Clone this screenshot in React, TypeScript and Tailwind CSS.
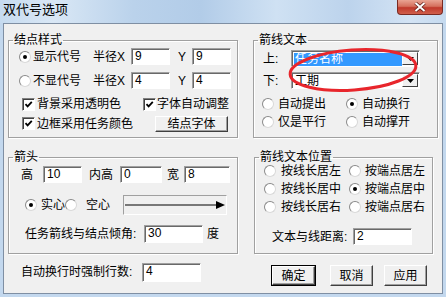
import React from "react";

const font = "font-['Liberation_Sans','Noto_Sans_CJK_SC',sans-serif]";

function Radio({ on }: { on?: boolean }) {
  return (
    <span className="w-[12px] h-[12px] shrink-0 rounded-full bg-white border border-t-[#8a8a8a] border-l-[#8a8a8a] border-r-[#d8d8d8] border-b-[#d8d8d8] flex items-center justify-center">
      {on && <span className="w-[4px] h-[4px] rounded-full bg-black" />}
    </span>
  );
}

function Check() {
  return (
    <span className="w-[13px] h-[13px] shrink-0 bg-white border border-t-[#808080] border-l-[#808080] border-b-white border-r-white shadow-[inset_1px_1px_0_#404040] flex items-center justify-center">
      <svg width="9" height="9" viewBox="0 0 9 9">
        <path d="M1.5 4.2 L3.6 6.4 L7.8 1.8" stroke="#000" strokeWidth="1.8" fill="none" />
      </svg>
    </span>
  );
}

function Field({ v, w }: { v: string; w: string }) {
  return (
    <div className={`${w} h-full bg-white border border-t-[#a0a0a0] border-l-[#a0a0a0] border-b-white border-r-white shadow-[inset_1px_1px_0_#696969] pl-[3px] text-[12px] leading-[15px]`}>
      {v}
    </div>
  );
}

function Btn({ label, w, def }: { label: string; w: string; def?: boolean }) {
  return (
    <div className={`${w} h-full ${def ? "border border-black" : ""}`}>
      <div className="h-full bg-[#f0f0f0] border border-t-white border-l-white border-b-[#404040] border-r-[#404040] shadow-[inset_-1px_-1px_0_#a0a0a0] flex items-center justify-center text-[12px]">
        {label}
      </div>
    </div>
  );
}

function Combo({ v, sel }: { v: string; sel?: boolean }) {
  return (
    <div className="w-[129px] h-full bg-white border border-t-[#a0a0a0] border-l-[#a0a0a0] border-b-white border-r-white shadow-[inset_1px_1px_0_#696969] flex p-[1px] pl-[2px]">
      <div className={`flex-1 h-full mt-[1px] pl-[1px] text-[12px] leading-[13px] ${sel ? "bg-[#3399ff] text-white" : ""}`}>{v}</div>
      <div className="w-[16px] h-full bg-[#f0f0f0] border border-t-white border-l-white border-b-[#404040] border-r-[#404040] flex items-center justify-center">
        <svg width="7" height="4" viewBox="0 0 7 4">
          <path d="M0 0 H7 L3.5 4 Z" fill="#000" />
        </svg>
      </div>
    </div>
  );
}

function Group({ title, cls, children }: { title: string; cls: string; children: React.ReactNode }) {
  return (
    <fieldset className={`${cls} border border-[#a0a0a0] shadow-[1px_1px_0_#fff,inset_1px_1px_0_#fff] flex flex-col`}>
      <legend className="ml-[4px] px-[1px] text-[12px] leading-[14px]">{title}</legend>
      {children}
    </fieldset>
  );
}

export default function App() {
  return (
    <div className={`relative w-[446px] h-[297px] overflow-hidden bg-[#c3d8ee] text-black text-[12px] leading-[14px] ${font}`}>
      {/* title bar */}
      <div className="h-[23px] flex bg-[linear-gradient(90deg,#c6dbf0_0%,#d9e7f5_12%,#bad2eb_30%,#b2cce8_45%,#cfe1f3_62%,#bcd3ec_78%,#d3e3f4_92%,#c5daef_100%)]">
        <div className="pl-[3px] pt-[2px] text-[13px] leading-[16px] text-black">双代号选项</div>
        <div className="ml-auto mr-[3px] w-[46px] h-[15px] rounded-b-[4px] border border-t-0 border-[#7a2a22] bg-[linear-gradient(180deg,#e9a493_0%,#d5705d_45%,#c0392b_55%,#d0604c_100%)] flex items-center justify-center">
          <svg width="12" height="10" viewBox="0 0 12 10">
            <path d="M1.5 1 L10.5 9 M10.5 1 L1.5 9" stroke="#5a1a14" strokeWidth="3.4" />
            <path d="M1.5 1 L10.5 9 M10.5 1 L1.5 9" stroke="#fff" strokeWidth="2" />
          </svg>
        </div>
      </div>

      {/* client area */}
      <div className="mx-[3px] h-[271px] bg-[#f0f0f0] border border-[#7f8fa3] px-[4px] pt-[9px]">
        <div className="flex">
          <Group title="结点样式" cls="w-[230px] h-[105px]">
            <div className="mt-[1px] h-[17px] flex items-center">
              <span className="ml-[10px]"><Radio on /></span>
              <span className="ml-[2px] w-[60px]">显示代号</span>
              <span className="w-[38px]">半径X</span>
              <Field v="9" w="w-[39px]" />
              <span className="w-[22px] pl-[8px]">Y</span>
              <Field v="9" w="w-[39px]" />
            </div>
            <div className="mt-[7px] h-[17px] flex items-center">
              <span className="ml-[10px]"><Radio /></span>
              <span className="ml-[2px] w-[60px]">不显代号</span>
              <span className="w-[38px]">半径X</span>
              <Field v="4" w="w-[39px]" />
              <span className="w-[22px] pl-[8px]">Y</span>
              <Field v="4" w="w-[39px]" />
            </div>
            <div className="mt-[7px] h-[16px] flex items-center">
              <span className="ml-[13px]"><Check /></span>
              <span className="ml-[2px] w-[106px]">背景采用透明色</span>
              <Check />
              <span className="ml-[1px] whitespace-nowrap">字体自动调整</span>
            </div>
            <div className="mt-[3px] h-[17px] flex items-center">
              <span className="ml-[13px]"><Check /></span>
              <span className="ml-[2px] w-[118px]">边框采用任务颜色</span>
              <div className="h-[16px]"><Btn label="结点字体" w="w-[73px]" /></div>
            </div>
          </Group>

          <Group title="箭线文本" cls="ml-[15px] w-[185px] h-[105px]">
            <div className="mt-[3px] h-[17px] flex items-center">
              <span className="ml-[9px] w-[28px]">上:</span>
              <Combo v="任务名称" sel />
            </div>
            <div className="mt-[5px] h-[17px] flex items-center">
              <span className="ml-[9px] w-[28px]">下:</span>
              <Combo v="工期" />
            </div>
            <div className="mt-[7px] h-[16px] flex items-center">
              <span className="ml-[8px]"><Radio /></span>
              <span className="ml-[4px] w-[68px]">自动提出</span>
              <Radio on />
              <span className="ml-[4px]">自动换行</span>
            </div>
            <div className="mt-[2px] h-[16px] flex items-center">
              <span className="ml-[8px]"><Radio /></span>
              <span className="ml-[4px] w-[68px]">仅是平行</span>
              <Radio />
              <span className="ml-[4px]">自动撑开</span>
            </div>
          </Group>
        </div>

        <div className="mt-[12px] flex">
          <Group title="箭头" cls="w-[230px] h-[104px]">
            <div className="mt-[2px] h-[17px] flex items-center">
              <span className="ml-[12px] w-[22px]">高</span>
              <Field v="10" w="w-[39px]" />
              <span className="w-[38px] pl-[7px]">内高</span>
              <Field v="0" w="w-[42px]" />
              <span className="w-[22px] pl-[5px]">宽</span>
              <Field v="8" w="w-[46px]" />
            </div>
            <div className="mt-[12px] h-[20px] flex items-center">
              <span className="ml-[16px]"><Radio on /></span>
              <span className="ml-[4px] w-[24px] whitespace-nowrap">实心</span>
              <Radio />
              <span className="ml-[9px] w-[24px] whitespace-nowrap">空心</span>
              <div className="ml-[13px] w-[104px] h-full border border-t-[#a0a0a0] border-l-[#a0a0a0] border-b-white border-r-white flex items-center">
                <svg width="102" height="10" viewBox="0 0 102 10">
                  <path d="M1 5 H93" stroke="#000" strokeWidth="1" />
                  <path d="M92 1 L101 5 L92 9 Z" fill="#000" />
                </svg>
              </div>
            </div>
            <div className="mt-[10px] h-[18px] flex items-center">
              <span className="ml-[16px] w-[119px] whitespace-nowrap">任务箭线与结点倾角:</span>
              <Field v="30" w="w-[59px]" />
              <span className="ml-[4px]">度</span>
            </div>
          </Group>

          <Group title="箭线文本位置" cls="ml-[16px] w-[179px] h-[104px]">
            <div className="h-[14px] flex items-center">
              <span className="ml-[9px]"><Radio /></span>
              <span className="ml-[5px] w-[68px]">按线长居左</span>
              <Radio />
              <span className="ml-[4px] whitespace-nowrap">按端点居左</span>
            </div>
            <div className="mt-[4px] h-[14px] flex items-center">
              <span className="ml-[9px]"><Radio /></span>
              <span className="ml-[5px] w-[68px]">按线长居中</span>
              <Radio on />
              <span className="ml-[4px] whitespace-nowrap">按端点居中</span>
            </div>
            <div className="mt-[4px] h-[14px] flex items-center">
              <span className="ml-[9px]"><Radio /></span>
              <span className="ml-[5px] w-[68px]">按线长居右</span>
              <Radio />
              <span className="ml-[4px] whitespace-nowrap">按端点居右</span>
            </div>
            <div className="mt-[14px] h-[17px] flex items-center">
              <span className="ml-[17px] w-[81px] whitespace-nowrap">文本与线距离:</span>
              <Field v="2" w="w-[59px]" />
            </div>
          </Group>
        </div>

        <div className="mt-[9px] h-[23px] flex items-start">
          <span className="ml-[13px] mt-[2px] w-[121px] whitespace-nowrap">自动换行时强制行数:</span>
          <div className="h-[19px]"><Field v="4" w="w-[59px]" /></div>
          <div className="ml-[70px] mt-[2px] h-[21px]"><Btn label="确定" w="w-[45px]" def /></div>
          <div className="ml-[14px] mt-[2px] h-[21px]"><Btn label="取消" w="w-[43px]" /></div>
          <div className="ml-[11px] mt-[2px] h-[21px]"><Btn label="应用" w="w-[43px]" /></div>
        </div>
      </div>

      {/* red annotation ellipse drawn over the combo boxes */}
      <svg className="absolute left-[284px] top-[44px] pointer-events-none" width="138" height="52" viewBox="0 0 138 52">
        <ellipse cx="69" cy="26" rx="63" ry="20" fill="none" stroke="#e8262c" strokeWidth="3" transform="rotate(-4 69 26)" />
      </svg>
    </div>
  );
}
